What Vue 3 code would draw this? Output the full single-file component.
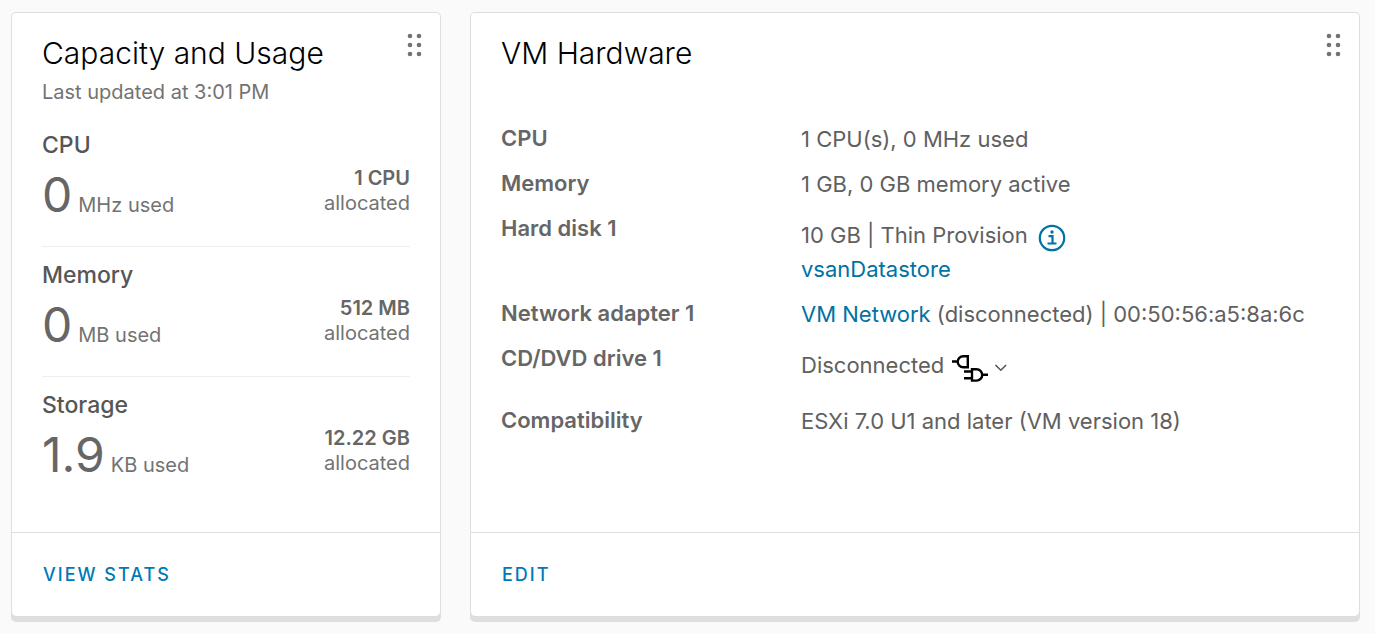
<script setup>
const usage = [
  { name: 'CPU', value: '0', unit: 'MHz used', total: '1 CPU' },
  { name: 'Memory', value: '0', unit: 'MB used', total: '512 MB' },
  { name: 'Storage', value: '1.9', unit: 'KB used', total: '12.22 GB' },
]
const dots = [3, 12, 21].flatMap((y) => [4, 13].map((x) => ({ x, y })))
</script>

<template>
  <main class="board">
    <section class="card">
      <div class="body">
        <header class="head">
          <h2>Capacity and Usage</h2>
          <button class="grip" type="button" aria-label="Move Capacity and Usage">
            <svg width="18" height="26" viewBox="0 0 18 26"><circle v-for="d in dots" :key="`${d.x}-${d.y}`" :cx="d.x" :cy="d.y" r="2.3" /></svg>
          </button>
        </header>
        <p class="updated">Last updated at 3:01 PM</p>
        <ul class="usage">
          <li v-for="u in usage" :key="u.name">
            <h3>{{ u.name }}</h3>
            <div class="stat">
              <div class="used"><span class="value">{{ u.value }}</span><span>{{ u.unit }}</span></div>
              <div class="total"><strong>{{ u.total }}</strong><span>allocated</span></div>
            </div>
          </li>
        </ul>
      </div>
      <footer><button class="action" type="button">VIEW STATS</button></footer>
    </section>

    <section class="card">
      <div class="body">
        <header class="head">
          <h2>VM Hardware</h2>
          <button class="grip" type="button" aria-label="Move VM Hardware">
            <svg width="18" height="26" viewBox="0 0 18 26"><circle v-for="d in dots" :key="`${d.x}-${d.y}`" :cx="d.x" :cy="d.y" r="2.3" /></svg>
          </button>
        </header>
        <dl class="hardware">
          <div class="row"><dt>CPU</dt><dd>1 CPU(s), 0 MHz used</dd></div>
          <div class="row"><dt>Memory</dt><dd>1 GB, 0 GB memory active</dd></div>
          <div class="row">
            <dt>Hard disk 1</dt>
            <dd>
              <div class="line">
                10 GB | Thin Provision
                <button class="info" type="button" aria-label="Disk details">
                  <svg width="28" height="28" viewBox="0 0 28 28" fill="none" stroke="#0072a3" stroke-width="2.2">
                    <circle cx="14" cy="14" r="12.2" />
                    <path d="M10.500 12.200h4v7M9.500 19.500h9" />
                    <circle cx="14" cy="8" r="1.7" fill="#0072a3" stroke="none" />
                  </svg>
                </button>
              </div>
              <a href="#datastore">vsanDatastore</a>
            </dd>
          </div>
          <div class="row"><dt>Network adapter 1</dt><dd><a href="#network">VM Network</a> (disconnected) | 00:50:56:a5:8a:6c</dd></div>
          <div class="row">
            <dt>CD/DVD drive 1</dt>
            <dd>
              <div class="line drive">
                Disconnected
                <button class="plug" type="button" aria-label="Drive connection menu">
                  <svg width="36" height="28" viewBox="0 0 36 28" fill="none" stroke="#000" stroke-width="2.4">
                    <path d="M0 7.500h6M15.800 2.200v11h-4.600a5.500 5.500 0 0 1 0-11z" />
                    <path d="M12 17.500h8M12 24.200h8M20 15.200h4.500a5.700 5.700 0 0 1 0 11.400H20zM30 20.800h6" />
                  </svg>
                  <svg width="14" height="10" viewBox="0 0 14 10" fill="none" stroke="#565656" stroke-width="1.600"><path d="M1.500 2l5.300 5.200L12.100 2" /></svg>
                </button>
              </div>
            </dd>
          </div>
          <div class="row"><dt>Compatibility</dt><dd>ESXi 7.0 U1 and later (VM version 18)</dd></div>
        </dl>
      </div>
      <footer><button class="action" type="button">EDIT</button></footer>
    </section>
  </main>
</template>

<style>
body {
  background: #fafafa;
}
</style>

<style scoped>
.board {
  box-sizing: border-box;
  min-height: 100vh;
  padding: 12px 15px 18px 11px;
  display: grid;
  grid-template-columns: 430fr 890fr;
  gap: 29px;
  font-family: Inter, "Liberation Sans", sans-serif;
  font-size: 22px;
  line-height: 34px;
  color: #606060;
}
.card {
  display: flex;
  flex-direction: column;
  background: #fff;
  border: 1px solid #dedede;
  border-bottom: 0;
  border-radius: 5px;
  box-shadow: 0 6px 0 #dedede;
}
.body {
  flex: 1;
  padding: 20px 30px 0;
}
.head {
  display: flex;
  justify-content: space-between;
}
h2, h3, p, ul, dl, dd {
  margin: 0;
  padding: 0;
}
h2 {
  font-size: 30px;
  line-height: 40px;
  font-weight: 300;
  color: #000;
}
button {
  padding: 0;
  border: 0;
  background: none;
  font: inherit;
  cursor: pointer;
}
.grip {
  height: 26px;
  margin-right: -14px;
}
svg {
  display: block;
}
.grip circle {
  fill: #737373;
}
.updated {
  font-size: 20px;
  line-height: 38px;
  color: #737373;
}
.usage {
  list-style: none;
}
.usage li {
  padding: 11px 0 8px;
}
.usage li + li {
  border-top: 1px solid #eee;
}
.usage li:first-child {
  padding-top: 17px;
}
h3 {
  font-size: 23px;
  line-height: 34px;
  font-weight: 500;
  color: #565656;
}
.stat {
  display: flex;
  justify-content: space-between;
  color: #666;
  font-size: 20px;
}
.used {
  display: flex;
  align-items: baseline;
  gap: 6px;
  line-height: 66px;
}
.value {
  font-size: 48px;
}
.used span + span, .total span {
  color: #737373;
}
.total {
  display: flex;
  flex-direction: column;
  padding-top: 4px;
  text-align: right;
  line-height: 25px;
}
strong, dt {
  font-weight: 600;
}
.hardware {
  padding-top: 49px;
}
.row {
  display: grid;
  grid-template-columns: 300fr 528fr;
  align-items: start;
  padding-bottom: 11px;
}
dt {
  color: #666;
  line-height: 32px;
}
.line {
  display: flex;
  align-items: flex-end;
  gap: 10px;
  padding-top: 6px;
}
.drive {
  gap: 8px;
  padding-bottom: 11px;
}
.plug {
  display: flex;
  align-items: center;
  gap: 6px;
}
a {
  color: #0072a3;
  text-decoration: none;
}
footer {
  padding: 25px 31px;
  border-top: 1px solid #dedede;
}
.action {
  display: block;
  color: #0079b8;
  font-size: 18px;
  line-height: 33px;
  font-weight: 500;
  letter-spacing: 2px;
}
</style>
